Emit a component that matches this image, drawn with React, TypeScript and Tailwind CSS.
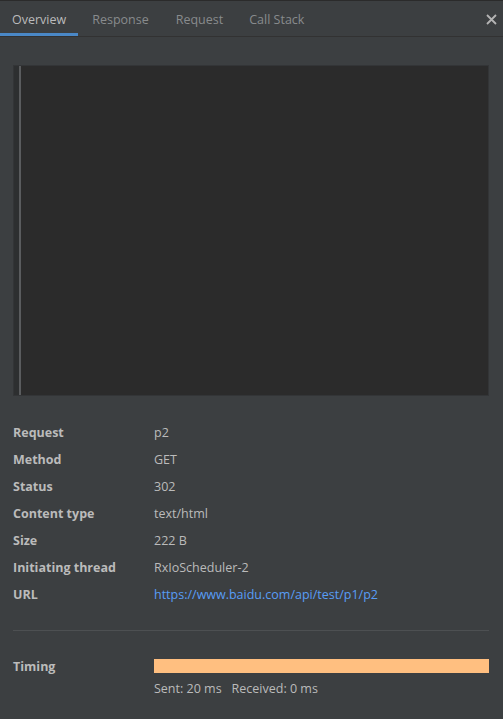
import React from "react";

const rows: [string, string, boolean?][] = [
  ["Request", "p2"],
  ["Method", "GET"],
  ["Status", "302"],
  ["Content type", "text/html"],
  ["Size", "222 B"],
  ["Initiating thread", "RxIoScheduler-2"],
  ["URL", "https://www.baidu.com/api/test/p1/p2", true],
];

export default function App() {
  return (
    <div
      className="w-[503px] h-[719px] bg-[#3c3f41] text-[#bbbbbb] overflow-hidden flex flex-col"
      style={{ fontFamily: '"Open Sans", "Noto Sans", sans-serif' }}
    >
      <div className="h-px bg-[#2b2b2b]" />
      <div className="h-[36px] flex items-stretch border-b border-[#323232] text-[12.5px]">
        <div className="relative px-[12px] pt-[3px] flex items-center text-[#bbbbbb]">
          Overview
          <div className="absolute left-0 right-0 bottom-0 h-[3px] bg-[#4a88c7]" />
        </div>
        <div className="px-[14px] pt-[3px] flex items-center text-[#888b8d]">Response</div>
        <div className="px-[13px] pt-[3px] flex items-center text-[#888b8d]">Request</div>
        <div className="px-[13px] pt-[3px] flex items-center text-[#888b8d]">Call Stack</div>
        <div className="flex-1" />
        <div className="flex items-center pr-[6px] pt-[1px]">
          <svg width="11" height="11" viewBox="0 0 11 11">
            <path d="M1 1L10 10M10 1L1 10" stroke="#b4b4b4" strokeWidth="1.8" />
          </svg>
        </div>
      </div>
      <div className="mt-[28px] ml-[13px] mr-[14px] h-[331px] bg-[#2b2b2b] border border-[#333537] flex">
        <div className="w-[5px] bg-[#2d2f30]" />
        <div className="w-[2px] bg-[#5a5c5e]" />
        <div className="flex-1" />
      </div>
      <div className="mt-[24px] pl-[13px] pr-[14px] flex flex-col text-[12.5px]">
        {rows.map(([k, v, link]) => (
          <div key={k} className="h-[27px] flex items-center">
            <div className="w-[141px] font-bold text-[#bbbbbb]">{k}</div>
            <div className={link ? "text-[#589df6]" : "text-[#bbbbbb]"}>{v}</div>
          </div>
        ))}
      </div>
      <div className="mt-[21px] ml-[13px] mr-[14px] h-px bg-[#4d5052]" />
      <div className="mt-[28px] h-[14px] pl-[13px] pr-[14px] flex items-center text-[12.5px]">
        <div className="w-[141px] font-bold relative top-[1px]">Timing</div>
        <div className="flex-1 h-[14px] bg-[#ffbf80]" />
      </div>
      <div className="mt-[7px] pl-[154px] text-[12.5px] text-[#bbbbbb] flex gap-[10px]">
        <span>Sent: 20 ms</span>
        <span>Received: 0 ms</span>
      </div>
    </div>
  );
}
